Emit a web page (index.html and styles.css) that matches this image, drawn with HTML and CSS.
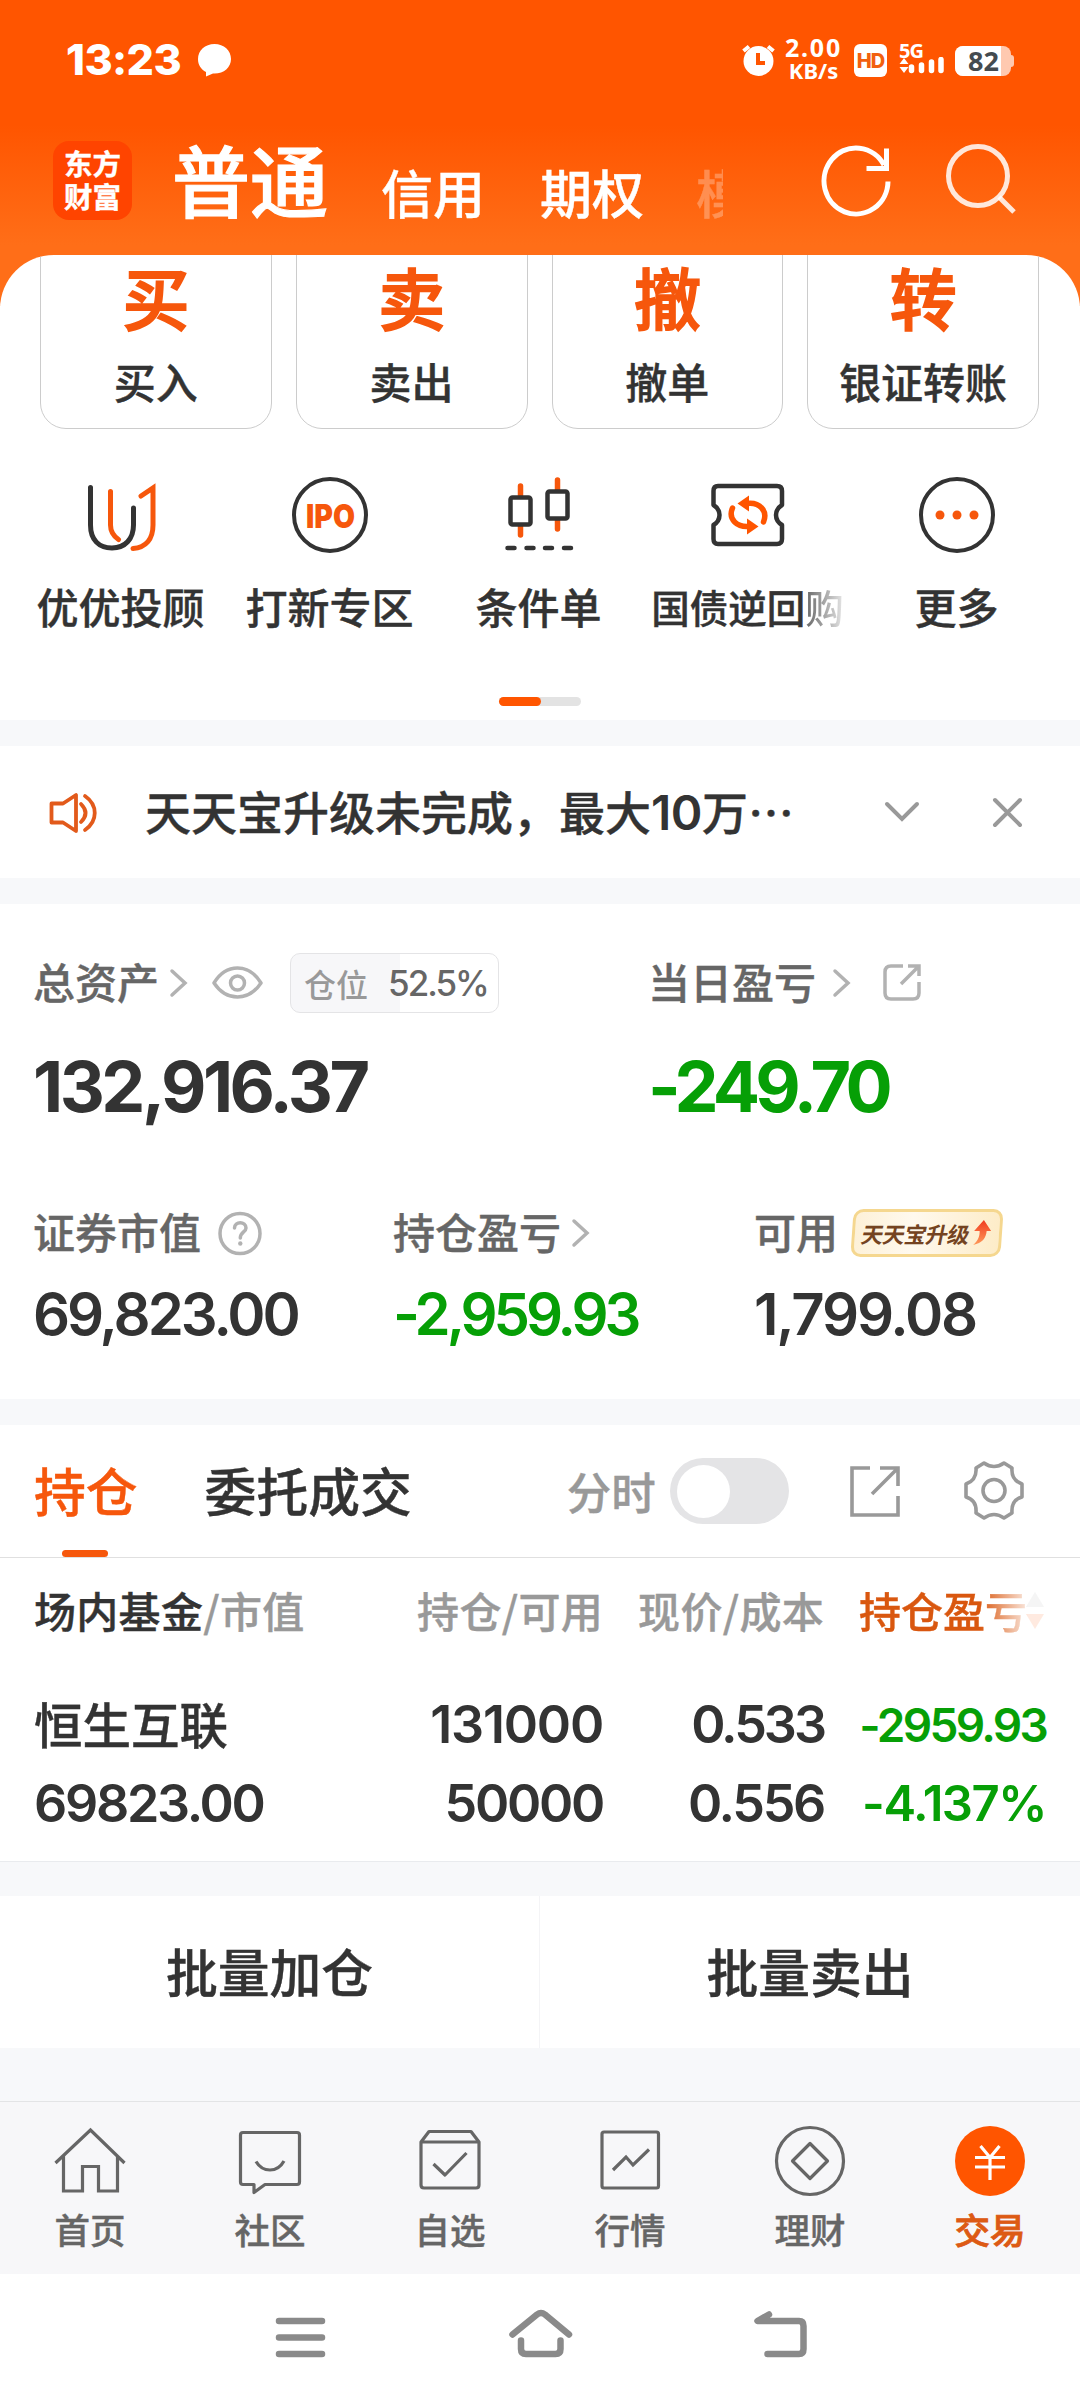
FILE: index.html
```html
<!DOCTYPE html>
<html lang="zh-CN">
<head>
<meta charset="utf-8">
<title>交易</title>
<link rel="stylesheet" href="styles.css">
</head>
<body>
<div class="app">
  <header class="header">
    <div class="status">
      <span class="clock">13:23</span>
      <svg class="bubble" width="34" height="34" viewBox="197 43 34 34"><path fill="#fff" d="M214.500 44C224 44 231 50.500 231 59S224 73.500 214.500 73.500H213L206 76.500V72C201 69.500 198 65 198 59 198 50.500 205 44 214.500 44Z"/></svg>
      <svg class="alarm" width="34" height="34" viewBox="742 44 34 34"><circle cx="758.500" cy="61" r="15" fill="#fff"/><path d="M743.500 51l5.500-4.500M773.500 51l-5.500-4.500" stroke="#fff" stroke-width="4"/><path d="M758 53v10h7" fill="none" stroke="#ff5500" stroke-width="4"/></svg>
      <span class="speed"><b>2.00</b><i>KB/s</i></span>
      <span class="hd">HD</span>
      <span class="signal"><b>5G</b>
        <svg width="46" height="18" viewBox="899 58 46 18"><path fill="#fff" d="M904 59l4.500 6h-9zM904 74l4.500-6h-9z"/><path d="M911.500 68v3.500M921.500 66v5.500M931.500 63v8.500M941 60.500v11" stroke="#fff" stroke-width="5.500" stroke-linecap="round"/></svg>
      </span>
      <span class="battery"><span class="charge">82</span></span>
    </div>
    <nav class="topnav">
      <div class="logo">东方<br>财富</div>
      <span class="mode-on">普通</span>
      <span class="mode credit">信用</span>
      <span class="mode option">期权</span>
      <span class="mode next">模</span>
      <svg class="refresh" width="72" height="72" viewBox="820 146 72 72" fill="none" stroke="#fff" stroke-width="5"><path d="M888 182.500A32 33 0 1 1 884 166"/><path d="M886.500 149.500V169.500H866.500"/></svg>
      <svg class="search" width="72" height="72" viewBox="945 144 72 72" fill="none" stroke="#fff" stroke-opacity=".85" stroke-width="5"><circle cx="978" cy="177" r="29.500"/><path d="M999 198l15 15"/></svg>
    </nav>
  </header>

  <section class="sheet">
    <div class="actions">
      <div class="action"><b>买</b><span>买入</span></div>
      <div class="action"><b>卖</b><span>卖出</span></div>
      <div class="action"><b>撤</b><span>撤单</span></div>
      <div class="action"><b>转</b><span>银证转账</span></div>
    </div>
    <div class="quick">
      <div class="entry">
        <svg width="80" height="80" viewBox="82 475 80 80" fill="none" stroke-width="5" stroke-linecap="round"><path stroke="#333" d="M91.500 487.500V525C91.500 540 100 548 113 548S134.500 539 134.500 525V508"/><path stroke="#f6570c" d="M111.500 491.500V525Q111.500 534 119.500 539.500M142 496L154 488V525C154 539 147 547.500 134 548.500"/></svg>
        <span>优优投顾</span>
      </div>
      <div class="entry">
        <svg width="80" height="80" viewBox="290 475 80 80"><circle cx="330" cy="515" r="36" fill="none" stroke="#333" stroke-width="4"/><text class="ipo" x="330.500" y="527.500" text-anchor="middle" textLength="49" lengthAdjust="spacingAndGlyphs">IPO</text></svg>
        <span>打新专区</span>
      </div>
      <div class="entry">
        <svg width="80" height="80" viewBox="499 475 80 80" fill="none" stroke-width="4.500" stroke-linecap="round"><path stroke="#f6570c" stroke-width="5.500" d="M520.500 486V496M520.500 526V535M557.500 480V490M557.500 520V529"/><rect stroke="#333" x="510.500" y="497.500" width="20" height="27" rx="2"/><rect stroke="#333" x="547.500" y="491.500" width="20" height="27" rx="2"/><path stroke="#333" d="M507.500 548h7M526.500 548h7M545 548h7M564 548h7"/></svg>
        <span>条件单</span>
      </div>
      <div class="entry">
        <svg width="80" height="80" viewBox="708 475 80 80" fill="none" stroke-width="4.500"><path stroke="#333" stroke-linejoin="round" d="M718 486H777Q782 486 782 491V505C774 510 774 520 782 525V539Q782 544 777 544H718Q713.500 544 713.500 539V525C721.500 520 721.500 510 713.500 505V491Q713.500 486 718 486Z"/><path stroke="#f50" stroke-width="5.500" stroke-linecap="round" d="M732.500 508C727.500 520 738 527 748 526.500M747 503.500C760 502 768 511 763.500 522"/><path fill="#f50" d="M737.500 503.500l11.500-8v16zM758.500 526.500l-11.500-8v16z"/></svg>
        <span class="long">国债逆回<em>购</em></span>
      </div>
      <div class="entry">
        <svg width="80" height="80" viewBox="918 475 80 80"><circle cx="958" cy="515" r="36" fill="none" stroke="#333" stroke-width="4"/><g fill="#f6570c"><circle cx="941" cy="515" r="4.500"/><circle cx="958" cy="515" r="4.500"/><circle cx="975" cy="515" r="4.500"/></g></svg>
        <span>更多</span>
      </div>
    </div>
    <div class="pager"><i></i></div>
  </section>

  <section class="notice">
    <svg width="52" height="46" viewBox="47 788 52 46" fill="none" stroke="#e25a1b" stroke-width="3.800"><path stroke-linejoin="round" d="M51.500 802.500H63L76 794V830L63 821.500H51.500Z"/><path stroke-linecap="round" d="M81 803Q90 812 81 821M85 795C98 804 98 820 85 829"/></svg>
    <p>天天宝升级未完成，最大<span class="num">10</span>万<span class="dots">…</span></p>
    <svg class="down" width="38" height="24" viewBox="883 801 38 24" fill="none" stroke="#999" stroke-width="4" stroke-linecap="round"><path d="M887 805l15 15 15-15"/></svg>
    <svg class="close" width="34" height="34" viewBox="991 795 34 34" stroke="#999" stroke-width="4" stroke-linecap="round"><path d="M995 800l25 25M1020 800l-25 25"/></svg>
  </section>

  <section class="assets">
    <div class="labels first">
      <div class="cell total">
        <span>总资产</span>
        <svg class="chev" width="20" height="30" viewBox="0 0 20 30"><path d="M3 3l13 12L3 27"/></svg>
        <svg class="eye" width="54" height="38" viewBox="211 963 54 38" fill="none" stroke="#b2b2b2" stroke-width="3.500"><path stroke-linejoin="round" d="M215 982C221 972 229 967 238.500 967S256 972 262 982C256 991 248 996 238.500 996S221 991 215 982Z"/><circle cx="238.500" cy="982" r="7"/></svg>
        <div class="ratio"><span>仓位</span><b class="num">52.5%</b></div>
      </div>
      <div class="cell">
        <span>当日盈亏</span>
        <svg class="chev wide" width="20" height="30" viewBox="0 0 20 30"><path d="M3 3l13 12L3 27"/></svg>
        <svg class="share" width="40" height="42" viewBox="883 963 40 42" fill="none" stroke="#b2b2b2" stroke-width="3.500"><path d="M904 967H892Q886 967 886 973V994Q886 1000 892 1000H914Q920 1000 920 994V983M909 967H920V977M920 967L902 985"/></svg>
      </div>
    </div>
    <div class="figures big">
      <b class="num">132,916.37</b>
      <b class="num green day">-249.70</b>
    </div>
    <div class="labels second">
      <div class="cell"><span>证券市值</span>
        <svg class="help" width="46" height="46" viewBox="219 1211 46 46"><circle cx="242" cy="1234.500" r="20" fill="none" stroke="#b2b2b2" stroke-width="3.500"/><path fill="none" stroke="#b2b2b2" stroke-width="3.500" stroke-linecap="round" d="M236.500 1229C236.500 1222 248 1222 248 1229 248 1233 242.300 1233 242.300 1239"/><circle cx="242.300" cy="1244.500" r="2.200" fill="#b2b2b2"/></svg>
      </div>
      <div class="cell"><span>持仓盈亏</span><svg class="chev" width="20" height="30" viewBox="0 0 20 30"><path d="M3 3l13 12L3 27"/></svg></div>
      <div class="cell"><span>可用</span>
        <div class="promo"><span>天天宝升级</span><svg width="20" height="28" viewBox="975 1219 20 28"><path fill="url(#rise)" d="M986 1220L994 1231H989.500C989.500 1238 986 1243 977 1245 982 1240 983 1236 982.500 1231H977Z"/><defs><linearGradient id="rise" x1="0" y1="0" x2="0" y2="1"><stop offset="0" stop-color="#f03b20"/><stop offset="1" stop-color="#ff9a5a"/></linearGradient></defs></svg></div>
      </div>
    </div>
    <div class="figures small">
      <span class="num">69,823.00</span>
      <span class="num green held">-2,959.93</span>
      <span class="num cash">1,799.08</span>
    </div>
  </section>

  <section class="holdings">
    <div class="tabs">
      <span class="tab on">持仓</span>
      <span class="tab orders">委托成交</span>
      <span class="minute">分时</span>
      <span class="toggle"><i></i></span>
      <svg class="export" width="54" height="54" viewBox="848 1464 54 54" fill="none" stroke="#999" stroke-width="3.600"><path d="M870 1468H852V1515H898V1496M880 1468H898V1486M898 1468L872 1494"/></svg>
      <svg class="gear" width="64" height="64" viewBox="962 1460 64 64" fill="none" stroke="#999" stroke-width="3.600" stroke-linejoin="round"><path d="M984 1464Q994 1471 1004 1464L1012 1469Q1011 1481 1022 1485V1498Q1011 1501 1012 1514L1004 1519Q994 1512 984 1519L976 1514Q977 1501 966 1498V1485Q977 1481 976 1469Z"/><circle cx="994" cy="1491.500" r="11"/></svg>
    </div>
    <div class="row head">
      <span><b>场内基金</b>/市值</span><span>持仓/可用</span><span>现价/成本</span>
      <span class="sorted">持仓盈亏<svg width="22" height="40" viewBox="0 0 22 40"><path fill="#aaa" d="M11 2l9 15H2z"/><path fill="#f50" d="M11 39l9-15H2z"/></svg></span>
    </div>
    <div class="row name-row"><span class="fund">恒生互联</span><span class="num count">131000</span><span class="num price">0.533</span><span class="num green loss">-2959.93</span></div>
    <div class="row value-row"><span class="num">69823.00</span><span class="num">50000</span><span class="num">0.556</span><span class="num green pct">-4.137%</span></div>
  </section>

  <section class="batch"><span>批量加仓</span><span>批量卖出</span></section>

  <nav class="tabbar">
    <div class="item"><svg width="76" height="76" viewBox="52 2123 76 76" fill="none" stroke="#666" stroke-width="3.200"><path d="M55.500 2163L90.500 2130 124.500 2163M63.500 2156V2191H82.500V2166.500H98.500V2191H117.500V2156"/></svg><span>首页</span></div>
    <div class="item"><svg width="76" height="76" viewBox="232 2123 76 76" fill="none" stroke="#666" stroke-width="3.200" stroke-linejoin="round"><path d="M243 2132.500H297Q299.500 2132.500 299.500 2135V2182Q299.500 2184.500 297 2184.500H265L254 2192.500V2184.500H243Q240.500 2184.500 240.500 2182V2135Q240.500 2132.500 243 2132.500Z"/><path d="M256 2161.500Q261 2170 270 2170T284 2161"/></svg><span>社区</span></div>
    <div class="item"><svg width="76" height="76" viewBox="412 2123 76 76" fill="none" stroke="#666" stroke-width="3.200" stroke-linejoin="round"><path d="M421 2142L429 2131.500H471L479 2142V2185Q479 2188 476 2188H424Q421 2188 421 2185ZM421 2142H479M433.500 2164L445 2175 466.500 2153"/></svg><span>自选</span></div>
    <div class="item"><svg width="76" height="76" viewBox="592 2123 76 76" fill="none" stroke="#666" stroke-width="3.200"><rect x="602" y="2132" width="56.500" height="56" rx="2"/><path d="M613 2170L626 2157 633 2165 649 2149.500"/></svg><span>行情</span></div>
    <div class="item"><svg width="76" height="76" viewBox="772 2123 76 76" fill="none" stroke="#666" stroke-width="3.200" stroke-linejoin="round"><circle cx="810" cy="2161" r="33.500"/><path d="M810 2143.500L827.500 2161 810 2178.500 792.500 2161Z"/></svg><span>理财</span></div>
    <div class="item active"><svg width="76" height="76" viewBox="952 2123 76 76" fill="none" stroke="#fff" stroke-width="3.200"><circle cx="990" cy="2161" r="35" fill="#f50" stroke="none"/><path d="M980.500 2146L990 2157.500 999.500 2146M975 2157.500H1005M975 2167H1005M990 2157V2180"/></svg><span>交易</span></div>
  </nav>

  <nav class="sysnav">
    <svg width="54" height="50" viewBox="274 2309 54 50" stroke="#8a8a8a" stroke-width="6.500" stroke-linecap="round"><path d="M279 2321h43M279 2337.500h43M279 2354h43"/></svg>
    <svg width="70" height="50" viewBox="506 2309 70 50" fill="none" stroke="#8a8a8a" stroke-width="6.500" stroke-linecap="round"><path d="M512.500 2334.500L537 2314.500Q541 2311.500 545 2314.500L569 2334.500M521 2340.500V2349Q521 2354 526 2354H555.500Q560.500 2354 560.500 2349V2340.500"/></svg>
    <svg width="60" height="50" viewBox="750 2309 60 50" fill="none" stroke="#8a8a8a" stroke-width="6.500" stroke-linecap="round" stroke-linejoin="round"><path d="M769 2314.500L757.500 2321H799Q803.500 2321 803.500 2326V2349Q803.500 2354 799 2354H767.500"/></svg>
  </nav>
</div>
</body>
</html>
```
FILE: styles.css
```css
* { box-sizing: border-box; }
body {
  margin: 0;
  font-family: "Noto Sans CJK SC", "Noto Sans", sans-serif;
  font-weight: 500;
  color: #333;
  -webkit-text-stroke: 0.4px currentColor;
}
b, i, em { font-weight: inherit; font-style: normal; }
svg { display: block; flex: none; }
span { white-space: nowrap; }
.app { width: 1080px; height: 2400px; overflow: hidden; background: #f7f8fa; display: flex; flex-direction: column; }
.num { font-family: Inter, sans-serif; -webkit-text-stroke: 0; }
.green { color: #069f06; }

/* header */
.header { height: 306px; flex: none; background: linear-gradient(#ff5500 0, #ff5500 125px, #ff6e18 245px); color: #fff; }
.status { height: 118px; padding: 0 66px; display: flex; align-items: center; -webkit-text-stroke: 0; }
.clock { font: 800 43px/43px Inter, sans-serif; letter-spacing: -0.6px; width: 131px; }
.bubble { margin-top: 2px; }
.alarm { margin-left: 511px; margin-top: 4px; }
.speed { width: 57px; margin-left: 9px; display: flex; flex-direction: column; align-items: center; font: 700 25px/23px "Noto Sans", sans-serif; letter-spacing: 1.8px; }
.speed i { font-size: 22px; line-height: 23px; letter-spacing: 0; }
.hd { width: 33px; height: 33px; margin: 2px 0 0 12px; border-radius: 6px; background: #fff; color: #f2600f; font: 800 20px/34px Inter, sans-serif; letter-spacing: -1px; text-align: center; }
.signal { width: 46px; height: 34px; margin: 0 0 0 12px; font: 700 20px/17px "Noto Sans", sans-serif; }
.signal b { display: block; height: 15px; line-height: 17px; letter-spacing: -1px; }
.battery { position: relative; width: 56px; height: 30px; margin: 4px 0 0 10px; border-radius: 8px; background: #ffc9b0; }
.battery::after { content: ""; position: absolute; left: 56px; top: 9px; width: 3px; height: 12px; border-radius: 0 3px 3px 0; background: #ffc9b0; }
.charge { display: block; width: 46px; height: 30px; border-radius: 8px 0 0 8px; background: #fff; color: #444b50; font: 700 27px/30px "Noto Sans", sans-serif; padding-left: 13px; }

.topnav { height: 130px; padding-left: 53px; display: flex; align-items: center; }
.logo { width: 79px; height: 79px; margin-top: -5px; padding-top: 5px; border-radius: 16px; background: #ff4400; font-size: 28.5px; font-weight: 700; line-height: 33px; text-align: center; }
.mode-on { margin: -11px 0 0 40px; width: 160px; font-size: 78px; line-height: 100px; -webkit-text-stroke-width: 1.2px; }
.mode { font-size: 52px; line-height: 70px; margin-top: 17px; }
.credit { margin-left: 49px; width: 106px; }
.option { margin-left: 53px; width: 106px; }
.next { margin-left: 50px; width: 27px; overflow: hidden; opacity: .28; }
.refresh { margin: -4px 0 0 97px; }
.search { margin: -8px 0 0 53px; }

/* white sheet */
.sheet { margin-top: -51px; height: 465px; flex: none; border-radius: 54px 54px 0 0; background: #fff; overflow: hidden; }
.actions { height: 200px; margin-top: -26px; padding: 0 41px 0 40px; display: grid; grid-template-columns: repeat(4, 1fr); column-gap: 24px; }
.action { height: 200px; border: 1px solid #ccc; border-radius: 26px; display: flex; flex-direction: column; align-items: center; }
.action b { margin-top: 21px; font-size: 67px; line-height: 90px; height: 90px; color: #f6570c; -webkit-text-stroke-width: 1.8px; }
.action span { margin-top: 9px; font-size: 42px; line-height: 62px; }
.quick { height: 254px; padding: 46px 17px 0 16px; display: grid; grid-template-columns: repeat(5, 209px); }
.entry { display: flex; flex-direction: column; align-items: center; }
.entry span { margin-top: 20px; font-size: 42px; line-height: 62px; }
.entry .long { font-size: 38.5px; }
.long em { color: transparent; -webkit-text-stroke: 0; background: linear-gradient(90deg, #666, #e8e8e8); -webkit-background-clip: text; background-clip: text; }
.ipo { font: 900 33px Inter, sans-serif; fill: #f6570c; -webkit-text-stroke: 0; }
.pager { width: 82px; height: 9px; margin: 14px 0 0 499px; border-radius: 5px; background: #e3e3e3; }
.pager i { display: block; width: 42px; height: 9px; border-radius: 5px; background: #f50; }

/* notice */
.notice { height: 132px; margin-top: 26px; padding-left: 47px; flex: none; background: #fff; display: flex; align-items: center; }
.notice p { margin: -1px 0 0 46px; width: 691px; font-size: 46px; line-height: 66px; white-space: nowrap; }
.notice .num { font-weight: 600; font-size: 48px; letter-spacing: -0.5px; }
.down { margin-left: 47px; }
.close { margin-left: 70px; }

/* assets */
.assets { height: 495px; margin-top: 26px; padding: 44px 0 0 33px; flex: none; background: #fff; }
.labels { display: grid; height: 70px; font-size: 42px; line-height: 70px; color: #666; }
.first { grid-template-columns: 615px 1fr; }
.second { grid-template-columns: 360px 361px 1fr; margin-top: 66px; }
.cell { display: flex; align-items: center; }
.cell > span { margin-top: -4px; }
.chev { margin-left: 10px; fill: none; stroke: #b2b2b2; stroke-width: 3.5; stroke-linecap: round; }
.chev.wide { margin-left: 16px; }
.eye { margin-left: 21px; }
.share { margin-left: 30px; }
.ratio { width: 209px; height: 60px; margin-left: 26px; border: 1px solid #e4e4e6; border-radius: 10px; background: linear-gradient(90deg, #f7f7f9 52.5%, #fff 52.5%); display: flex; align-items: center; color: #999; font-size: 32px; line-height: 58px; padding-left: 13px; -webkit-text-stroke: 0; }
.ratio b { margin-left: 20px; font-size: 35px; font-weight: 500; color: #666; letter-spacing: -2px; }
.figures { display: grid; }
.big { grid-template-columns: 615px 1fr; margin-top: 24px; height: 90px; font-size: 70px; line-height: 90px; font-weight: 700; letter-spacing: -3.5px; }
.big .day { letter-spacing: -4.8px; }
.help { margin-left: 16px; }
.promo { width: 150px; height: 48px; margin-left: 14px; border: 3px solid #f5d78f; border-radius: 10px; transform: skewX(-4deg); background: linear-gradient(90deg, #fdf1d8, #fff9ee 40%, #fdecc8); display: flex; align-items: center; justify-content: center; gap: 3px; color: #744321; font-size: 22px; font-weight: 700; line-height: 42px; -webkit-text-stroke: 0; }
.promo span { transform: skewX(-8deg); letter-spacing: -0.5px; }
.small { grid-template-columns: 360px 361px 1fr; margin-top: 8px; height: 76px; font-size: 58px; line-height: 76px; font-weight: 600; letter-spacing: -3px; }
.small .held { letter-spacing: -4px; }
.small .cash { letter-spacing: -2.2px; }

/* holdings */
.holdings { height: 437px; margin-top: 26px; flex: none; background: #fff; border-bottom: 1px solid #e9ebee; }
.tabs { height: 133px; padding-left: 34px; border-bottom: 1px solid #e0e0e0; display: flex; align-items: center; }
.tab { font-size: 51.800px; line-height: 130px; height: 132px; margin-top: -1px; }
.tab.on { color: #f6570c; position: relative; }
.tab.on::after { content: ""; position: absolute; left: 28px; bottom: 0; width: 46px; height: 7px; border-radius: 4px; background: #f6570c; }
.orders { margin-left: 67px; }
.minute { margin: -2px 0 0 155px; width: 90px; font-size: 44.500px; color: #999; }
.toggle { width: 119px; height: 66px; margin-left: 13px; border-radius: 33px; background: #e4e4e6; padding: 7px; }
.toggle i { display: block; width: 53px; height: 53px; border-radius: 50%; background: #fff; }
.export { margin-left: 59px; }
.gear { margin-left: 60px; }
.row { padding-left: 34px; display: grid; grid-template-columns: 369px 200px 221px 222px; }
.row > :nth-child(n+2) { text-align: right; }
.head { height: 112px; font-size: 42px; letter-spacing: 0.3px; line-height: 104px; color: #999; }
.head b { color: #333; }
.head .sorted { height: 104px; letter-spacing: 0; color: #d9570f; display: flex; align-items: center; justify-content: flex-end; -webkit-mask-image: linear-gradient(90deg, #000 70%, rgba(0,0,0,.12) 92%); mask-image: linear-gradient(90deg, #000 70%, rgba(0,0,0,.12) 92%); }
.sorted svg { margin-left: -3px; }
.name-row, .value-row { height: 78px; line-height: 80px; font-size: 52px; font-weight: 600; letter-spacing: -2.300px; }
.name-row { margin-top: 15px; }
.value-row { line-height: 82px; }
.row .fund { font-size: 48.500px; line-height: 77px; font-weight: 500; letter-spacing: 0; }
.row .count { letter-spacing: -1.200px; }
.row .price { letter-spacing: -3px; }
.row .loss { font-size: 46px; letter-spacing: -2.700px; }
.row .pct { font-size: 49px; letter-spacing: -1.500px; }

/* batch */
.batch { height: 152px; margin-top: 34px; flex: none; background: #fff; display: grid; grid-template-columns: 539px 541px; text-align: center; font-size: 51.800px; line-height: 150px; }
.batch span + span { border-left: 1px solid #f4f4f6; }

/* tab bar */
.tabbar { height: 173px; margin-top: 53px; flex: none; border-top: 1px solid #e3e4e6; background: #f7f7f9; display: grid; grid-template-columns: repeat(6, 1fr); }
.item { display: flex; flex-direction: column; align-items: center; padding-top: 21px; color: #666; font-size: 35.5px; }
.item span { line-height: 50px; margin-top: 5px; }
.item.active { color: #dd5a14; -webkit-text-stroke-width: 0.9px; }

/* system navigation */
.sysnav { height: 126px; flex: none; background: #fff; display: flex; padding: 35px 0 0 274px; }
.sysnav svg:nth-child(2) { margin-left: 178px; }
.sysnav svg:nth-child(3) { margin-left: 174px; }
```
